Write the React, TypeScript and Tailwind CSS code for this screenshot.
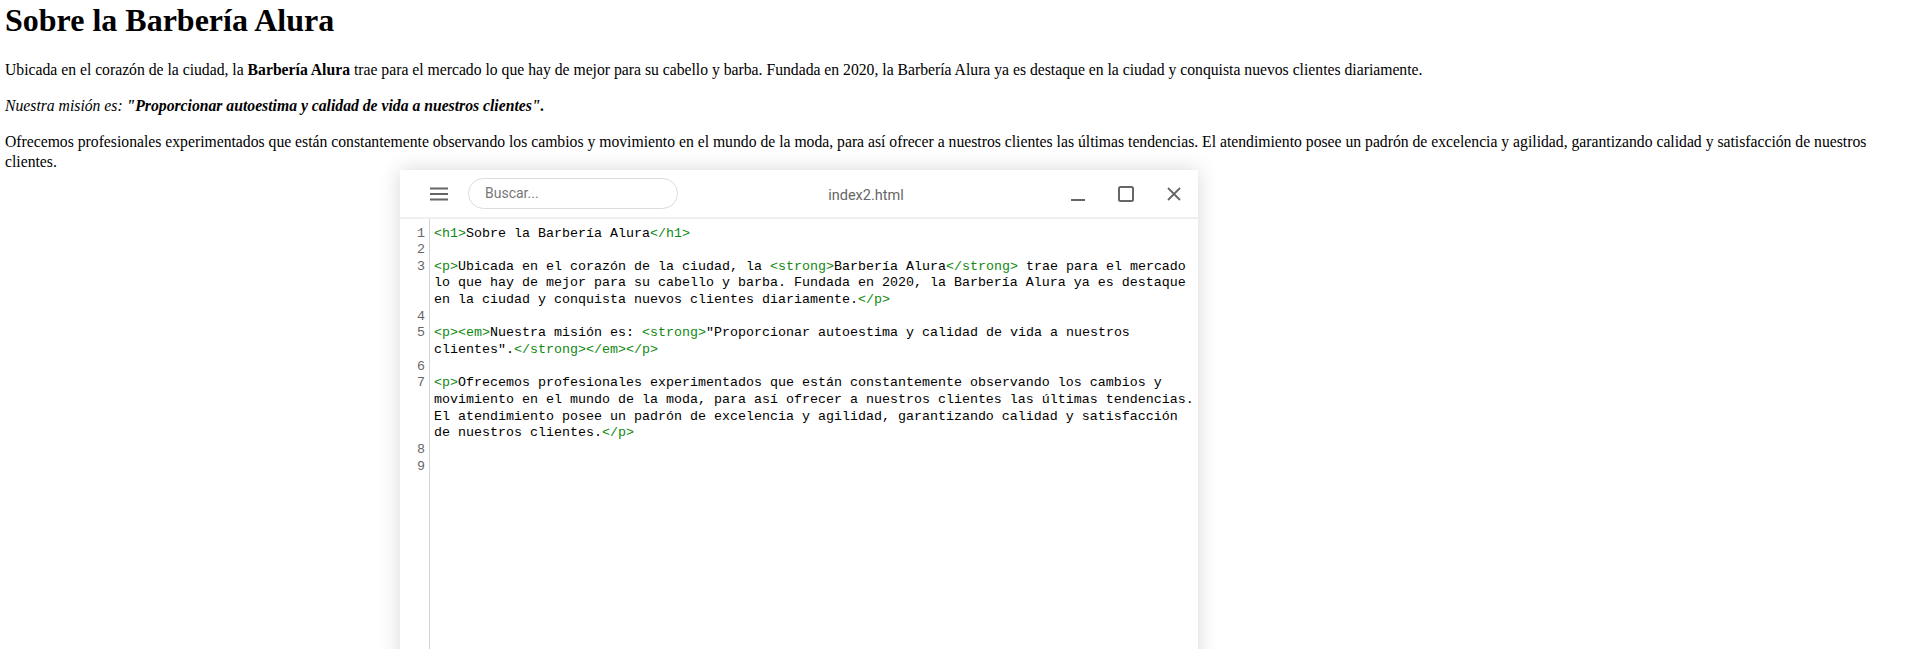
import React from "react";

type Seg = { t: string; tag?: boolean };
type VLine = { num?: number; segs: Seg[] };

const T = (t: string): Seg => ({ t, tag: true });
const X = (t: string): Seg => ({ t });

const lines: VLine[] = [
  { num: 1, segs: [T("<h1>"), X("Sobre la Barbería Alura"), T("</h1>")] },
  { num: 2, segs: [] },
  {
    num: 3,
    segs: [
      T("<p>"),
      X("Ubicada en el corazón de la ciudad, la "),
      T("<strong>"),
      X("Barbería Alura"),
      T("</strong>"),
      X(" trae para el mercado"),
    ],
  },
  { segs: [X("lo que hay de mejor para su cabello y barba. Fundada en 2020, la Barbería Alura ya es destaque")] },
  { segs: [X("en la ciudad y conquista nuevos clientes diariamente."), T("</p>")] },
  { num: 4, segs: [] },
  {
    num: 5,
    segs: [T("<p><em>"), X("Nuestra misión es: "), T("<strong>"), X('"Proporcionar autoestima y calidad de vida a nuestros')],
  },
  { segs: [X('clientes".'), T("</strong></em></p>")] },
  { num: 6, segs: [] },
  {
    num: 7,
    segs: [T("<p>"), X("Ofrecemos profesionales experimentados que están constantemente observando los cambios y")],
  },
  { segs: [X("movimiento en el mundo de la moda, para así ofrecer a nuestros clientes las últimas tendencias.")] },
  { segs: [X("El atendimiento posee un padrón de excelencia y agilidad, garantizando calidad y satisfacción")] },
  { segs: [X("de nuestros clientes."), T("</p>")] },
  { num: 8, segs: [] },
  { num: 9, segs: [] },
];

export default function App() {
  return (
    <div className="relative h-[649px] w-[1907px] overflow-hidden bg-white text-black font-['Liberation_Serif',serif]">
      <div className="px-[5px]">
        <h1 className="m-0 text-[32px] font-bold leading-[40px]">Sobre la Barbería Alura</h1>
        <p className="mt-[20px] text-[15.7px] leading-[20px]">
          Ubicada en el corazón de la ciudad, la <strong>Barbería Alura</strong> trae para el mercado lo que hay de mejor
          para su cabello y barba. Fundada en 2020, la Barbería Alura ya es destaque en la ciudad y conquista nuevos
          clientes diariamente.
        </p>
        <p className="mt-[16px] text-[15.7px] leading-[20px]">
          <em>
            Nuestra misión es: <strong>"Proporcionar autoestima y calidad de vida a nuestros clientes".</strong>
          </em>
        </p>
        <p className="mt-[16px] text-[15.7px] leading-[20px]">
          Ofrecemos profesionales experimentados que están constantemente observando los cambios y movimiento en el
          mundo de la moda, para así ofrecer a nuestros clientes las últimas tendencias. El atendimiento posee un padrón
          de excelencia y agilidad, garantizando calidad y satisfacción de nuestros clientes.
        </p>
      </div>

      {/* Floating editor window */}
      <div className="absolute left-[400px] top-[170px] flex h-[520px] w-[798px] flex-col bg-white shadow-[0_0_20px_rgba(0,0,0,0.16)]">
        <div className="flex h-[49px] shrink-0 items-center border-b-2 border-[#efefef] pl-[15px] font-['Roboto',sans-serif]">
          <button className="flex h-full w-[48px] items-center justify-center">
            <svg width="18" height="14" viewBox="0 0 18 14">
              <rect x="0" y="0.5" width="18" height="2" fill="#666" />
              <rect x="0" y="6" width="18" height="2" fill="#666" />
              <rect x="0" y="11.5" width="18" height="2" fill="#666" />
            </svg>
          </button>
          <div className="ml-[5px] flex h-[31px] w-[210px] items-center rounded-full border border-[#dcdcdc] pl-[16px] text-[14px] text-[#777]">
            Buscar...
          </div>
          <div className="mt-[4px] flex flex-1 justify-center text-[14.5px] text-[#666]">index2.html</div>
          <button className="flex h-full w-[48px] items-center justify-center">
            <svg width="16" height="16" viewBox="0 0 16 16">
              <line x1="1" y1="14" x2="15" y2="14" stroke="#666" strokeWidth="2" />
            </svg>
          </button>
          <button className="flex h-full w-[48px] items-center justify-center">
            <svg width="16" height="16" viewBox="0 0 16 16">
              <rect x="1" y="1" width="14" height="14" rx="1.5" fill="none" stroke="#666" strokeWidth="2" />
            </svg>
          </button>
          <button className="flex h-full w-[48px] items-center justify-center">
            <svg width="16" height="16" viewBox="0 0 16 16">
              <path d="M2 2 L14 14 M14 2 L2 14" stroke="#666" strokeWidth="1.8" fill="none" />
            </svg>
          </button>
        </div>
        <div className="flex flex-1 font-['Liberation_Mono',monospace] text-[13.333px] leading-[16.667px]">
          <div className="w-[30px] shrink-0 border-r border-[#d4d4d4] pr-[4px] pt-[6.5px] text-right text-[#666]">
            {lines.map((l, i) => (
              <div key={i} className="h-[16.667px]">
                {l.num ?? ""}
              </div>
            ))}
          </div>
          <div className="flex-1 pl-[4px] pt-[6.5px] text-black">
            {lines.map((l, i) => (
              <div key={i} className="h-[16.667px] whitespace-pre">
                {l.segs.map((s, j) => (
                  <span key={j} className={s.tag ? "text-[#118811]" : ""}>
                    {s.t}
                  </span>
                ))}
              </div>
            ))}
          </div>
        </div>
      </div>
    </div>
  );
}
